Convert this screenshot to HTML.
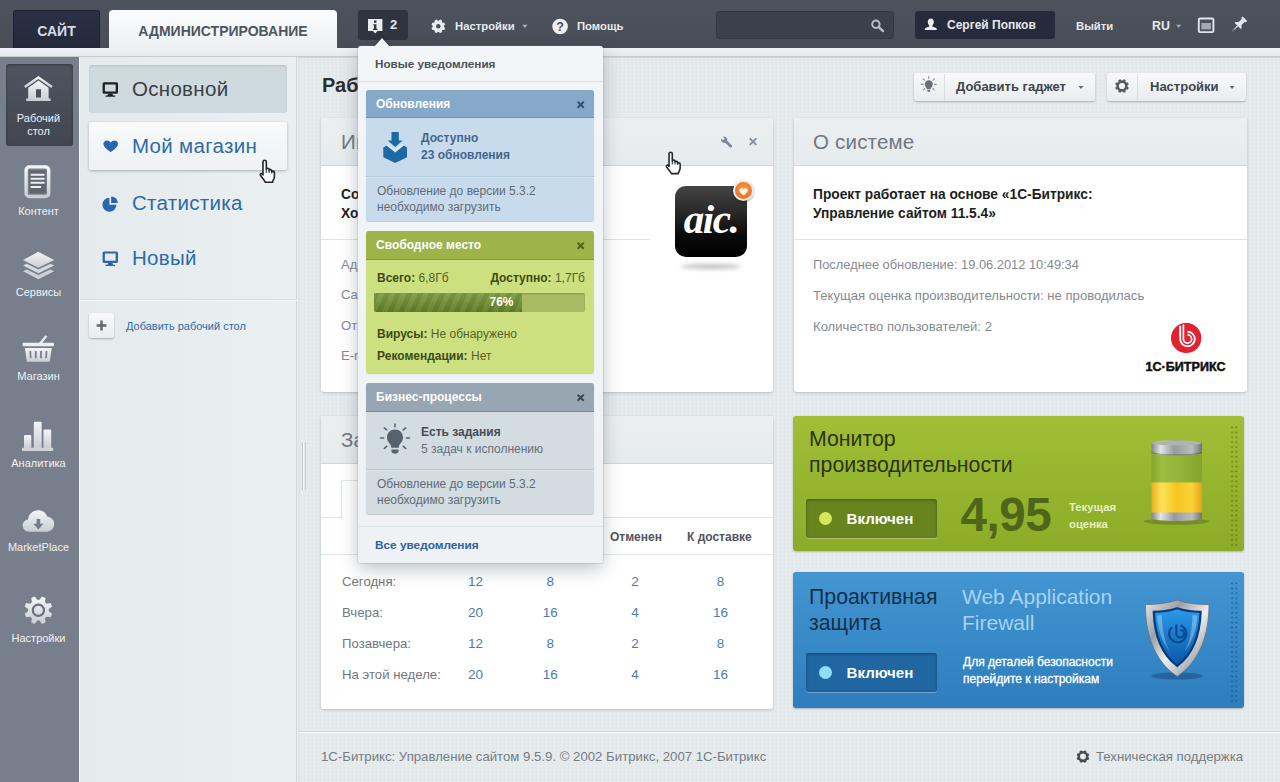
<!DOCTYPE html>
<html lang="ru">
<head>
<meta charset="utf-8">
<title>1С-Битрикс: Администрирование</title>
<style>
*{box-sizing:border-box;margin:0;padding:0}
html,body{width:1280px;height:782px;overflow:hidden}
body{position:relative;font-family:"Liberation Sans",sans-serif;font-size:12px;color:#333;background:#e6ebee}
.abs{position:absolute}
.b{font-weight:bold}
/* ---------- top bar ---------- */
#topbar{left:0;top:0;width:1280px;height:48px;background:linear-gradient(#4d535c,#484e57)}
#strip{left:0;top:48px;width:1280px;height:9px;background:linear-gradient(#eff2f4,#e6eaed);border-bottom:1px solid #c6cdd1}
#tab-site{left:13px;top:10px;width:87px;height:38px;background:linear-gradient(#2b3145,#232939);border-radius:3px 3px 0 0;border:1px solid #1d2230;border-bottom:0;color:#d9dde3;font-weight:bold;font-size:14px;line-height:41px;text-align:center}
#tab-admin{left:109px;top:10px;width:228px;height:40px;background:linear-gradient(#fbfcfd,#ecf0f2);border-radius:4px 4px 0 0;color:#50555c;font-weight:bold;font-size:14px;line-height:42px;text-align:center}
.tm{color:#e6e9ed;font-weight:bold;font-size:11.3px;line-height:14px;white-space:nowrap}
#notif-btn{left:358px;top:10px;width:50px;height:30px;background:#2f343f;border-radius:3px}
#search{left:716px;top:11px;width:178px;height:28px;background:#3b404c;border:1px solid #333843;border-radius:3px}
#user{left:915px;top:11px;width:140px;height:28px;background:#262b3c;border-radius:3px}
/* ---------- sidebars ---------- */
#side1{left:0;top:57px;width:79px;height:725px;background:#777f8c}
#side1-active{left:6px;top:64px;width:67px;height:82px;background:linear-gradient(#4f5560,#414651);border-radius:3px;box-shadow:inset 0 1px 3px rgba(0,0,0,.35)}
.s1l{left:0;width:77px;text-align:center;color:#eef1f4;font-size:11px;line-height:13px;white-space:nowrap}
#side2{left:79px;top:57px;width:218px;height:725px;background:linear-gradient(90deg,#e5ebed,#eaeff1);border-right:1px solid #d3dade;box-shadow:inset 1px 0 0 #f4f7f8}
.s2i{left:89px;width:198px;height:48px;border-radius:3px}
.s2t{left:132px;font-size:20.5px;line-height:24px;color:#2d6aa6;white-space:nowrap;letter-spacing:.3px}
/* ---------- main ---------- */
#main{left:298px;top:57px;width:982px;height:725px;background-color:#e3e9eb;background-image:repeating-linear-gradient(90deg,rgba(255,255,255,.16) 0 1px,transparent 1px 4px),repeating-linear-gradient(0deg,rgba(255,255,255,.1) 0 1px,transparent 1px 4px);box-shadow:inset 0 1px 0 #cfd6da,inset 2px 0 0 #dfe5e8}
.widget{background:#fff;border-radius:3px;box-shadow:0 1px 3px rgba(60,80,100,.28)}
.whead{left:0;top:0;width:100%;height:48px;background:linear-gradient(#ebeff2,#e6ebee);border-bottom:1px solid #cfd6db;border-radius:3px 3px 0 0}
.wtitle{font-size:20.5px;color:#70787f;line-height:24px;white-space:nowrap;letter-spacing:.2px}
.gray{color:#858a90}
.btn{background:linear-gradient(#f7f9fa,#e9edf0);border-radius:3px;box-shadow:0 1px 2px rgba(60,80,100,.4)}
.num{font-size:13.5px;line-height:31px;color:#4d7bab;text-align:center;width:24px;white-space:nowrap}
</style>
</head>
<body>
<!-- TOPBAR -->
<div id="topbar" class="abs"></div>
<div id="strip" class="abs"></div>
<div id="tab-site" class="abs">САЙТ</div>
<div id="tab-admin" class="abs">АДМИНИСТРИРОВАНИЕ</div>
<div id="notif-btn" class="abs"></div>
<div class="abs tm" style="left:390px;top:17.500px;font-size:13px">2</div>
<div class="abs tm" style="left:455px;top:19px">Настройки</div>
<div class="abs tm" style="left:577px;top:19px">Помощь</div>
<div id="search" class="abs"></div>
<div id="user" class="abs"></div>
<div class="abs tm" style="left:947px;top:18px;font-size:12px">Сергей Попков</div>
<div class="abs tm" style="left:1076px;top:19px">Выйти</div>
<div class="abs tm" style="left:1152px;top:18.5px;font-size:12.3px">RU</div>

<!-- SIDEBAR 1 -->
<div id="side1" class="abs"></div>
<div id="side1-active" class="abs"></div>
<div class="abs s1l" style="top:112px">Рабочий<br>стол</div>
<div class="abs s1l" style="top:205px">Контент</div>
<div class="abs s1l" style="top:286px">Сервисы</div>
<div class="abs s1l" style="top:370px">Магазин</div>
<div class="abs s1l" style="top:457px">Аналитика</div>
<div class="abs s1l" style="top:541px">MarketPlace</div>
<div class="abs s1l" style="top:632px">Настройки</div>

<!-- SIDEBAR 2 -->
<div id="side2" class="abs"></div>
<div class="abs s2i" style="top:65px;background:#cfdadf;box-shadow:inset 0 1px 2px rgba(0,0,0,.12)"></div>
<div class="abs s2i" style="top:122px;background:linear-gradient(#f8fafb,#eef2f4);box-shadow:0 1px 3px rgba(60,80,100,.4)"></div>
<div class="abs s2t" style="top:77px;color:#3a3f45">Основной</div>
<div class="abs s2t" style="top:134px">Мой магазин</div>
<div class="abs s2t" style="top:191px">Статистика</div>
<div class="abs s2t" style="top:246px">Новый</div>
<div class="abs" style="left:80px;top:299px;width:217px;height:1px;background:#d5dde1"></div>
<div class="abs" style="left:80px;top:300px;width:217px;height:1px;background:#f6f9fa"></div>
<div class="abs btn" style="left:89px;top:313px;width:25px;height:25px"></div>
<div class="abs" style="left:126px;top:319px;font-size:11px;line-height:14px;color:#2d6aa6;white-space:nowrap">Добавить рабочий стол</div>

<!-- MAIN -->
<div id="main" class="abs"></div>
<div class="abs b" style="left:322px;top:71px;font-size:20px;line-height:28px;color:#2a2d31">Рабочий стол</div>


<!-- WIDGET 1 -->
<div class="abs widget" style="left:321px;top:118px;width:452px;height:274px">
  <div class="abs whead"></div>
  <div class="abs wtitle" style="left:20px;top:12px">Информация</div>
  <div class="abs b" style="left:20px;top:66.500px;font-size:13.75px;line-height:19.5px;color:#1d1f22;white-space:nowrap">Создание сайта: студия<br>Хорошие люди AIC</div>
  <div class="abs" style="left:0;top:121px;width:329px;height:1px;background:#dfe4e7"></div>
  <div class="abs gray" style="left:20px;top:131.700px;font-size:13.1px;line-height:30.6px;white-space:nowrap">Адрес сайта:<br>Сайт:<br>Ответственное лицо:<br>E-mail:</div>
  <div class="abs" style="left:354px;top:68px;width:72px;height:71px;border-radius:11px;background:linear-gradient(#454545,#2a2a2a 35%,#0a0a0a 70%,#000)"></div>
  <div class="abs" style="left:360px;top:146px;width:60px;height:5px;border-radius:50%;background:rgba(0,0,0,.25);filter:blur(2px)"></div>
  <div class="abs" style="left:352px;top:79px;width:76px;text-align:center;font-family:'Liberation Serif',serif;font-style:italic;font-weight:bold;font-size:41px;line-height:44px;color:#fff;letter-spacing:-1.5px">aic.</div>
  <div class="abs" style="left:412px;top:62px;width:21px;height:21px;border-radius:50%;background:radial-gradient(circle at 50% 40%,#f79a4a,#e8641c);border:2px solid #f3ebe3;box-shadow:0 1px 2px rgba(0,0,0,.4)"></div>
</div>

<!-- WIDGET 2 : orders -->
<div class="abs widget" style="left:321px;top:416px;width:452px;height:293px">
  <div class="abs whead"></div>
  <div class="abs wtitle" style="left:20px;top:12px">Заказы</div>
  <div class="abs" style="left:0;top:101px;width:452px;height:1px;background:#dfe4e7"></div>
  <div class="abs" style="left:20px;top:64px;width:110px;height:38px;border:1px solid #dfe4e7;border-bottom:1px solid #fff;border-radius:3px 3px 0 0;background:#fff"></div>
  <div class="abs" style="left:0;top:138px;width:452px;height:1px;background:#e4e8eb"></div>
  <div class="abs b" style="left:289px;top:114px;font-size:12px;line-height:14px;color:#50555a;white-space:nowrap">Отменен</div>
  <div class="abs b" style="left:366px;top:114px;font-size:12px;line-height:14px;color:#50555a;white-space:nowrap">К доставке</div>
  <div class="abs b" style="left:128px;top:114px;font-size:12px;line-height:14px;color:#50555a;white-space:nowrap">Создан</div>
  <div class="abs b" style="left:203px;top:114px;font-size:12px;line-height:14px;color:#50555a;white-space:nowrap">Оплачен</div>
  <div class="abs" style="left:21px;top:149.700px;color:#72777c;font-size:13.2px;line-height:31px;white-space:nowrap">Сегодня:<br>Вчера:<br>Позавчера:<br>На этой неделе:</div>
  <div class="abs num" style="left:142.400px;top:149.900px">12<br>20<br>12<br>20</div>
  <div class="abs num" style="left:217.300px;top:149.900px">8<br>16<br>8<br>16</div>
  <div class="abs num" style="left:302px;top:149.900px">2<br>4<br>2<br>4</div>
  <div class="abs num" style="left:387.400px;top:149.900px">8<br>16<br>8<br>16</div>
</div>

<!-- WIDGET 3 : about system -->
<div class="abs widget" style="left:794px;top:118px;width:453px;height:274px">
  <div class="abs whead"></div>
  <div class="abs wtitle" style="left:19px;top:12px">О системе</div>
  <div class="abs b" style="left:19px;top:66.500px;font-size:13.75px;line-height:19.5px;color:#1d1f22;white-space:nowrap">Проект работает на основе «1С-Битрикс:<br>Управление сайтом 11.5.4»</div>
  <div class="abs" style="left:0;top:121px;width:453px;height:1px;background:#dfe4e7"></div>
  <div class="abs gray" style="left:19px;top:139px;font-size:12.85px;line-height:15px;white-space:nowrap">Последнее обновление: 19.06.2012 10:49:34</div>
  <div class="abs gray" style="left:19px;top:169.700px;font-size:13.1px;line-height:15px;white-space:nowrap">Текущая оценка производительности: не проводилась</div>
  <div class="abs gray" style="left:19px;top:201px;font-size:13.1px;line-height:15px;white-space:nowrap">Количество пользователей: 2</div>
  <div class="abs" style="left:377px;top:205px;width:30px;height:30px;border-radius:50%;background:#e0232d"></div>
  <div class="abs b" style="left:351.500px;top:241.500px;font-size:12.5px;line-height:14px;color:#111;white-space:nowrap;letter-spacing:.05px;-webkit-text-stroke:.5px #111">1С·БИТРИКС</div>
</div>

<!-- toolbar buttons -->
<div class="abs btn" style="left:914px;top:73px;width:181px;height:28px"></div>
<div class="abs" style="left:944px;top:74px;width:1px;height:26px;background:#d9dfe3"></div>
<div class="abs b" style="left:956px;top:80px;font-size:13px;line-height:14px;color:#3f444a;white-space:nowrap">Добавить гаджет</div>
<div class="abs btn" style="left:1107px;top:73px;width:139px;height:28px"></div>
<div class="abs" style="left:1137px;top:74px;width:1px;height:26px;background:#d9dfe3"></div>
<div class="abs b" style="left:1150px;top:80px;font-size:13px;line-height:14px;color:#3f444a;white-space:nowrap">Настройки</div>

<!-- GREEN PANEL -->
<div class="abs" style="left:793px;top:416px;width:451px;height:135px;border-radius:3px;background:linear-gradient(#a0bf36,#8cab27);box-shadow:0 1px 2px rgba(60,80,100,.35)">
  <div class="abs" style="left:16px;top:9.500px;font-size:21.3px;line-height:26.8px;color:#2a3312;white-space:nowrap">Монитор<br>производительности</div>
  <div class="abs" style="left:13px;top:82.500px;width:131px;height:39.500px;border-radius:3px;background:#67841f;box-shadow:inset 0 1px 3px rgba(0,0,0,.35),0 1px 0 rgba(255,255,255,.3)"></div>
  <div class="abs" style="left:26px;top:96px;width:13px;height:13px;border-radius:50%;background:#d4e95a"></div>
  <div class="abs b" style="left:53.500px;top:94px;font-size:15.1px;line-height:17px;color:#fff;white-space:nowrap">Включен</div>
  <div class="abs b" style="left:167.500px;top:73.500px;font-size:47.5px;line-height:50px;color:#4e651a;white-space:nowrap;letter-spacing:-.4px">4,95</div>
  <div class="abs" style="left:276px;top:83px;font-size:11.3px;font-weight:bold;line-height:17.2px;color:#e6f0c4;white-space:nowrap">Текущая<br>оценка</div>
  <div class="abs" style="left:436.700px;top:8.500px;width:8.400px;height:122px;background-image:radial-gradient(circle at 50% 50%,rgba(75,100,15,.5) 0 .9px,transparent 1.3px);background-size:4.200px 4.900px"></div>
</div>

<!-- BLUE PANEL -->
<div class="abs" style="left:793px;top:572px;width:451px;height:136px;border-radius:3px;background:linear-gradient(#4396d2,#2e7dbd);box-shadow:0 1px 2px rgba(60,80,100,.35)">
  <div class="abs" style="left:16px;top:12px;font-size:21.3px;line-height:26px;color:#14304a;white-space:nowrap">Проактивная<br>защита</div>
  <div class="abs" style="left:169px;top:12px;font-size:21px;line-height:26px;color:#a9d2f0;white-space:nowrap">Web Application<br>Firewall</div>
  <div class="abs" style="left:13px;top:80.500px;width:131px;height:39.500px;border-radius:3px;background:#2066a1;box-shadow:inset 0 1px 3px rgba(0,0,0,.35),0 1px 0 rgba(255,255,255,.3)"></div>
  <div class="abs" style="left:26px;top:94px;width:13px;height:13px;border-radius:50%;background:#8fdcf5"></div>
  <div class="abs b" style="left:53.500px;top:92px;font-size:15.1px;line-height:17px;color:#fff;white-space:nowrap">Включен</div>
  <div class="abs" style="left:170px;top:81.500px;font-size:12px;line-height:17.2px;color:#fff;-webkit-text-stroke:.3px #fff;white-space:nowrap">Для деталей безопасности<br>перейдите к настройкам</div>
  <div class="abs" style="left:436.700px;top:8.500px;width:8.400px;height:122px;background-image:radial-gradient(circle at 50% 50%,rgba(20,70,130,.5) 0 .9px,transparent 1.3px);background-size:4.200px 4.900px"></div>
</div>


<svg class="abs" style="left:0;top:0" width="1280" height="782" viewBox="0 0 1280 782">
<defs><linearGradient id="gsil" x1="0" y1="0" x2="0" y2="1"><stop offset="0" stop-color="#f4f5f7"/><stop offset="1" stop-color="#c9cdd3"/></linearGradient><linearGradient id="gmet" x1="0" y1="0" x2="1" y2="0"><stop offset="0" stop-color="#7e8486"/><stop offset=".18" stop-color="#e2e5e6"/><stop offset=".45" stop-color="#959b9d"/><stop offset=".8" stop-color="#b9bdbf"/><stop offset="1" stop-color="#6e7476"/></linearGradient><linearGradient id="gyel" x1="0" y1="0" x2="1" y2="0"><stop offset="0" stop-color="#e9b21a"/><stop offset=".2" stop-color="#ffe25a"/><stop offset=".5" stop-color="#f7c61f"/><stop offset=".8" stop-color="#fbd13a"/><stop offset="1" stop-color="#e2a715"/></linearGradient><linearGradient id="ggrn" x1="0" y1="0" x2="1" y2="0"><stop offset="0" stop-color="#84a62c"/><stop offset=".2" stop-color="#9dbd42"/><stop offset=".6" stop-color="#92b437"/><stop offset="1" stop-color="#82a52b"/></linearGradient><linearGradient id="gshb" x1="0" y1="0" x2="0" y2="1"><stop offset="0" stop-color="#2a9bea"/><stop offset="1" stop-color="#0b55a6"/></linearGradient><linearGradient id="gshs" x1="0" y1="0" x2="1" y2="1"><stop offset="0" stop-color="#e6e8ea"/><stop offset=".3" stop-color="#9aa1a8"/><stop offset=".55" stop-color="#eceef0"/><stop offset=".8" stop-color="#a4abb2"/><stop offset="1" stop-color="#d8dbde"/></linearGradient></defs>
<path d="M368 19h14.4v12h-5l-2.2 2.6-2.2-2.6h-5z" fill="#e9ecef"/>
<path d="M374 20.6h2.4v2.2H374zM373.2 24.2h3.2v4.6h1v1.1h-4.4v-1.1h1v-3.5h-.8z" fill="#2f343f"/>
<path d="M443.88 26.78 L445.10 27.98 L444.29 29.92 L442.59 29.90 L441.90 30.59 L441.92 32.29 L439.98 33.10 L438.78 31.88 L437.82 31.88 L436.62 33.10 L434.68 32.29 L434.70 30.59 L434.01 29.90 L432.31 29.92 L431.50 27.98 L432.72 26.78 L432.72 25.82 L431.50 24.62 L432.31 22.68 L434.01 22.70 L434.70 22.01 L434.68 20.31 L436.62 19.50 L437.82 20.72 L438.78 20.72 L439.98 19.50 L441.92 20.31 L441.90 22.01 L442.59 22.70 L444.29 22.68 L445.10 24.62 L443.88 25.82Z M436.00 26.30 a2.3 2.3 0 1 0 4.6 0 a2.3 2.3 0 1 0 -4.6 0Z" fill="#e9ecef" fill-rule="evenodd"/>
<path d="M522.3 24.8h5.2l-2.6 3.2z" fill="#aab0b9"/>
<path d="M1176 24.8h5.4l-2.7 3z" fill="#aab0b9"/>
<circle cx="560.1" cy="26.5" r="7.8" fill="#eef0f3"/>
<text x="560.1" y="31" text-anchor="middle" font-family="Liberation Sans, sans-serif" font-weight="bold" font-size="12.5" fill="#474d57">?</text>
<circle cx="875.9" cy="24.2" r="3.7" fill="none" stroke="#b9bec6" stroke-width="2"/><path d="M878.7 27.1l4.3 4" stroke="#b9bec6" stroke-width="2.4" stroke-linecap="round"/>
<path d="M930.8 18.6c1.9 0 3 1.5 3 3.4 0 1.4-.6 2.7-1.5 3.4v1c1.6.5 4 1.1 4.3 2.2.2.6.2 1.1.2 1.5h-12c0-.4 0-.9.2-1.5.3-1.1 2.700-1.700 4.300-2.200v-1c-.9-.7-1.500-2-1.500-3.400 0-1.900 1.100-3.400 3-3.400z" fill="#eef0f3"/>
<rect x="1198.8" y="18.5" width="14.6" height="13.6" rx="1.2" fill="none" stroke="#e3e6ea" stroke-width="1.9"/><rect x="1201.3" y="23" width="9.6" height="6.4" fill="#a3a9b2"/>
<g transform="translate(1238.200 25.400) rotate(45)" fill="#e3e6ea"><path d="M-3.200-9.500h6.400v1.800l-1.200.8v4.200l2.400 2.200v1.300h-8.800v-1.300l2.400-2.200v-4.200l-1.200-.8z"/><path d="M-.7.800h1.400l-.7 9z"/></g>
<path d="M38.4 76l14.300 10-1.400 1.900-12.900-9-12.900 9-1.400-1.900z" fill="url(#gsil)"/>
<path d="M38.4 80.600l10.200 7.100v10.700h2v2.600h-24.400v-2.600h2v-10.700zM36 89.200v8.200h5v-8.200z" fill="url(#gsil)" fill-rule="evenodd"/>
<rect x="26.1" y="166.900" width="22.600" height="29.600" rx="3.300" fill="none" stroke="url(#gsil)" stroke-width="3.400"/>
<rect x="29.300" y="170.300" width="16.400" height="23" fill="#5f6672"/>
<path d="M30.600 174.700h14M30.600 178.700h14M30.600 182.700h14M30.600 186.900h10.400" stroke="#eceef1" stroke-width="2"/>
<path d="M38.400 251.800l15.800 8.300-15.800 7.600-15.400-7.600z" fill="url(#gsil)"/>
<path d="M23 265.600l3.800-1.900 11.600 5.700 12-5.700 3.800 1.900-15.800 7.600z" fill="#d5d9de"/>
<path d="M23 271.300l3.800-1.900 11.600 5.700 12-5.700 3.800 1.900-15.800 8z" fill="#cdd1d7"/>
<path d="M45.400 335.200l1.900 1.300-5.700 7.200h-3.200z" fill="#e9ebee"/>
<rect x="22.600" y="342.700" width="31.400" height="3.600" rx="1" fill="#eceef1"/>
<path d="M24.900 348h26.800l-1.900 13.800h-23zM29.400 351h1.800l.3 7.200h-1.600zM34.900 351h1.800v7.200h-1.800zM40.100 351h1.800v7.200h-1.800zM45.600 351h1.800l-.5 7.200h-1.600z" fill="url(#gsil)" fill-rule="evenodd"/>
<rect x="24" y="435" width="7.300" height="13.500" rx="1" fill="url(#gsil)"/><rect x="33.800" y="421.800" width="7.900" height="26.700" rx="1" fill="url(#gsil)"/><rect x="43.500" y="429.400" width="7.700" height="19" rx="1" fill="url(#gsil)"/><rect x="22" y="447.800" width="31.200" height="3.300" rx=".8" fill="#d0d4d9"/>
<path d="M29.500 531.800c-4 0-6.800-2.800-6.800-6.200 0-3.100 2.300-5.500 5.300-6 .6-5.300 4.600-9.300 10.100-9.300 4.400 0 8 2.700 9.300 6.500 3.900.3 6.800 3.400 6.800 7.300 0 4.200-3.200 7.700-7.600 7.700z" fill="url(#gsil)"/>
<path d="M36.600 519h3.600v4.700h3.300l-5.100 5.700-5.100-5.700h3.300z" fill="#767d8a"/>
<path d="M48.74 611.34 L52.14 613.80 L50.66 617.37 L46.52 616.70 L44.90 618.32 L45.57 622.46 L42.00 623.94 L39.54 620.54 L37.26 620.54 L34.80 623.94 L31.23 622.46 L31.90 618.32 L30.28 616.70 L26.14 617.37 L24.66 613.80 L28.06 611.34 L28.06 609.06 L24.66 606.60 L26.14 603.03 L30.28 603.70 L31.90 602.08 L31.23 597.94 L34.80 596.46 L37.26 599.86 L39.54 599.86 L42.00 596.46 L45.57 597.94 L44.90 602.08 L46.52 603.70 L50.66 603.03 L52.14 606.60 L48.74 609.06Z" fill="url(#gsil)"/>
<circle cx="38.400" cy="610.200" r="5.600" fill="none" stroke="#6a717d" stroke-width="2.200"/>
<path d="M104.19999999999999 82.2h12.200a1.600 1.600 0 0 1 1.600 1.600v8.400a1.600 1.600 0 0 1-1.600 1.600h-12.200a1.600 1.600 0 0 1-1.600-1.600v-8.400a1.600 1.600 0 0 1 1.600-1.600zM104.89999999999999 84.4v7.200h10.800v-7.200z" fill="#1d2024" fill-rule="evenodd"/><path d="M108.19999999999999 93.8h4.200l.7 1.700h2v1.300h-9.600v-1.300h2z" fill="#1d2024"/>
<path d="M104.19999999999999 251.4h12.200a1.600 1.600 0 0 1 1.600 1.600v8.400a1.600 1.600 0 0 1-1.600 1.600h-12.200a1.600 1.600 0 0 1-1.600-1.600v-8.400a1.600 1.600 0 0 1 1.600-1.600zM104.89999999999999 253.6v7.200h10.800v-7.200z" fill="#2d66a6" fill-rule="evenodd"/><path d="M108.19999999999999 263.0h4.200l.7 1.700h2v1.300h-9.600v-1.300h2z" fill="#2d66a6"/>
<path d="M110.700 152.300c-2.800-2.300-7.300-5.200-7.300-8.500 0-2 1.600-3.400 3.500-3.400 1.500 0 2.900.8 3.800 2 .9-1.200 2.300-2 3.800-2 1.900 0 3.500 1.400 3.500 3.400 0 3.300-4.500 6.200-7.300 8.500z" fill="#2866ad"/>
<path d="M109.400 197.800v6.900h7a7 7 0 1 1-7-6.900z" fill="#2866ad"/><path d="M111.100 196.400a6.800 6.800 0 0 1 6.800 6.700h-6.800z" fill="#2866ad"/>
<path d="M100.300 320.600h2.400v3.700h3.700v2.400h-3.700v3.700h-2.400v-3.700h-3.700v-2.400h3.700z" fill="#5f6770"/>
<g transform="translate(258.0 159.6) scale(1.08)"><path d="M4.6 2.1a1.55 1.55 0 0 1 3.1 0V8.9c0-1.3 2.6-1.2 2.6.3v.8c0-1.2 2.5-1 2.5.4v1c0-1.1 2.4-.9 2.4.5v3.8c0 2.4-1.5 3.4-1.8 5.3H6.8c-.5-1.8-2.6-3.6-4.4-6.2-1-1.6.6-2.6 1.8-1.3l.4.7z" fill="#fff" stroke="#23272d" stroke-width="1.5" stroke-linejoin="round"/><path d="M7.7 9v3.2M10.3 10v2.4M12.8 11v1.8" stroke="#23272d" stroke-width="1" fill="none"/></g>
<path d="M928.800 80.300c2.300 0 4 1.700 4 3.900 0 1.500-.8 2.500-1.500 3.300-.5.600-.7 1.200-.7 1.800h-3.600c0-.6-.2-1.200-.7-1.800-.7-.8-1.500-1.800-1.500-3.300 0-2.200 1.700-3.900 4-3.900z" fill="#6b7077"/><rect x="927.200" y="90" width="3.200" height="1.800" rx=".8" fill="#6b7077"/>
<path d="M928.800 76.500v1.800M923.300 78.800l1.300 1.300M934.300 78.800l-1.300 1.300M921.300 84.300h1.800M934.500 84.300h1.800M923.500 89.800l1.200-1.200M934.100 89.800l-1.200-1.200" stroke="#8b9097" stroke-width="1.200" stroke-linecap="round"/>
<path d="M1127.48 86.47 L1128.80 87.68 L1127.99 89.62 L1126.21 89.54 L1125.54 90.21 L1125.62 91.99 L1123.68 92.80 L1122.47 91.48 L1121.53 91.48 L1120.32 92.80 L1118.38 91.99 L1118.46 90.21 L1117.79 89.54 L1116.01 89.62 L1115.20 87.68 L1116.52 86.47 L1116.52 85.53 L1115.20 84.32 L1116.01 82.38 L1117.79 82.46 L1118.46 81.79 L1118.38 80.01 L1120.32 79.20 L1121.53 80.52 L1122.47 80.52 L1123.68 79.20 L1125.62 80.01 L1125.54 81.79 L1126.21 82.46 L1127.99 82.38 L1128.80 84.32 L1127.48 85.53Z M1118.90 86.00 a3.1 3.1 0 1 0 6.2 0 a3.1 3.1 0 1 0 -6.2 0Z" fill="#555a61" fill-rule="evenodd"/>
<path d="M1078.400 86h5.200l-2.600 3z" fill="#666b72"/><path d="M1229.500 86h5.200l-2.600 3z" fill="#666b72"/>
<path d="M302.500 442v48M305.500 442v48" stroke="#c3cbd0" stroke-width="1"/><path d="M303.500 442v48" stroke="#f4f7f8" stroke-width="1"/>
<g transform="translate(726.600 142.200) rotate(-45) scale(.86)" fill="#7d8899"><path d="M-1.600-1.500h3.200v8.300a1.600 1.600 0 0 1-3.200 0z"/><path d="M-3.600-4.200a3.800 3.800 0 0 1 2.200-3.300v3h2.800v-3a3.800 3.800 0 0 1 2.200 3.300 3.800 3.800 0 0 1-3.600 3.700 3.800 3.800 0 0 1-3.600-3.700z"/></g>
<path d="M749.800 138.300l6.600 6.600M756.400 138.300l-6.600 6.600" stroke="#7f8ca1" stroke-width="1.700"/>
<path d="M743.600 195.200c-1.700-1.400-4.300-3-4.300-5 0-1.200 1-2 2.100-2 .9 0 1.700.5 2.200 1.200.5-.7 1.300-1.200 2.200-1.200 1.100 0 2.100.8 2.100 2 0 2-2.600 3.600-4.300 5z" fill="#fff6ea"/>
<g transform="translate(664.2 151.6) scale(1.05)"><path d="M4.6 2.1a1.55 1.55 0 0 1 3.1 0V8.9c0-1.3 2.6-1.2 2.6.3v.8c0-1.2 2.5-1 2.5.4v1c0-1.1 2.4-.9 2.4.5v3.8c0 2.4-1.5 3.4-1.8 5.3H6.8c-.5-1.8-2.6-3.6-4.4-6.2-1-1.6.6-2.6 1.8-1.3l.4.7z" fill="#fff" stroke="#23272d" stroke-width="1.5" stroke-linejoin="round"/><path d="M7.7 9v3.2M10.3 10v2.4M12.8 11v1.8" stroke="#23272d" stroke-width="1" fill="none"/></g>
<circle cx="1186.500" cy="338" r="14.800" fill="#e0232e"/>
<path d="M1180.200 325.800v13.200a7.300 7.300 0 1 0 7.300-7.300" fill="none" stroke="#fff" stroke-width="1.900"/><path d="M1183.400 324.600v14.400a4.100 4.100 0 1 0 4.100-4.100" fill="none" stroke="#fff" stroke-width="1.700"/>
<ellipse cx="1176.500" cy="521.500" rx="33" ry="3.200" fill="rgba(50,70,10,.3)"/>
<rect x="1151.500" y="452" width="50.500" height="31" fill="url(#ggrn)"/>
<rect x="1151.500" y="482.500" width="50.500" height="31" fill="url(#gyel)"/>
<path d="M1151.500 512.500h50.500v5.500c0 4-50.500 4-50.500 0z" fill="url(#gmet)"/>
<path d="M1151.500 443c0-3.600 50.500-3.600 50.500 0v10c0 3-50.500 3-50.500 0z" fill="url(#gmet)"/>
<ellipse cx="1176.700" cy="443" rx="25" ry="2.300" fill="#aeb3b4"/>
<path d="M1151.500 452.500c8 3.200 42.500 3.200 50.500 0" fill="none" stroke="rgba(60,70,40,.45)" stroke-width="1"/>
<ellipse cx="1177" cy="676" rx="26" ry="3.500" fill="rgba(10,40,90,.35)"/>
<path d="M1177.200 600c9 3.400 21 4.600 31.800 4.600 0 28-8 56-31.800 71.800-23.800-15.800-31.800-43.800-31.800-71.800 10.800 0 22.800-1.200 31.800-4.600z" fill="url(#gshs)" stroke="#66717c" stroke-width=".8"/>
<path d="M1177.200 608.300c6.900 2.400 15.400 3.500 23.400 3.600-.6 21-7 41.500-23.400 54.100-16.400-12.600-22.800-33.100-23.400-54.100 8-.1 16.500-1.200 23.400-3.600z" fill="url(#gshb)" stroke="#0a3a78" stroke-width="2.200"/>
<path d="M1157 615.500c1.600 0 3.200-.2 4.800-.4.500 14 2.600 26 7.600 36-7.800-10-11.600-22-12.400-35.600zM1197.400 615.500c-1.600 0-3.200-.2-4.800-.4-.5 14-2.600 26-7.600 36 7.800-10 11.600-22 12.400-35.600z" fill="rgba(255,255,255,.3)"/>
<path d="M1176.400 624.500v9.300a3.800 3.800 0 1 0 3.800-3.800" fill="none" stroke="#0b4a94" stroke-width="2.200"/><path d="M1172 627.200a8.600 8.600 0 1 0 8.500-1.700" fill="none" stroke="#0b4a94" stroke-width="2.200"/>
<path d="M1088.28 757.06 L1089.21 758.13 L1088.48 759.91 L1087.06 760.01 L1086.41 760.66 L1086.31 762.08 L1084.53 762.81 L1083.46 761.88 L1082.54 761.88 L1081.47 762.81 L1079.69 762.08 L1079.59 760.66 L1078.94 760.01 L1077.52 759.91 L1076.79 758.13 L1077.72 757.06 L1077.72 756.14 L1076.79 755.07 L1077.52 753.29 L1078.94 753.19 L1079.59 752.54 L1079.69 751.12 L1081.47 750.39 L1082.54 751.32 L1083.46 751.32 L1084.53 750.39 L1086.31 751.12 L1086.41 752.54 L1087.06 753.19 L1088.48 753.29 L1089.21 755.07 L1088.28 756.14Z M1080.00 756.60 a3.0 3.0 0 1 0 6.0 0 a3.0 3.0 0 1 0 -6.0 0Z" fill="#474c52" fill-rule="evenodd"/>
</svg>
<!-- POPUP -->
<div class="abs" style="left:358px;top:46px;width:245px;height:517px;background:linear-gradient(#f3f6f8,#eef2f5);border-radius:3px;box-shadow:0 6px 18px rgba(40,55,70,.3),0 0 0 1px rgba(120,135,150,.18)">
  <div class="abs" style="left:16px;top:34px;width:12px;height:12px"></div>
  <div class="abs b" style="left:17px;top:11px;font-size:11.7px;line-height:14px;color:#4c5157;white-space:nowrap">Новые уведомления</div>
  <div class="abs" style="left:0;top:35px;width:245px;height:1px;background:#dde3e7"></div>

  <!-- card 1 -->
  <div class="abs" style="left:8px;top:44px;width:228px;height:131px;border-radius:3px;background:#c8dbec;box-shadow:0 1px 1px rgba(60,80,100,.25)">
    <div class="abs" style="left:0;top:0;width:228px;height:28px;border-radius:3px 3px 0 0;background:#86a9ca;box-shadow:inset 0 -1px 0 rgba(40,70,100,.25)"></div>
    <div class="abs b" style="left:10px;top:7px;font-size:12px;line-height:14px;color:#fff;white-space:nowrap">Обновления</div>
    <div class="abs b" style="left:55px;top:40px;font-size:12px;line-height:17px;color:#43658c;white-space:nowrap">Доступно<br>23 обновления</div>
    <div class="abs" style="left:0;top:86px;width:228px;height:1px;background:#b4cadd"></div>
    <div class="abs" style="left:0;top:87px;width:228px;height:1px;background:#d6e5f1"></div>
    <div class="abs" style="left:11px;top:94px;font-size:12px;line-height:15.5px;color:#5f6b76;white-space:nowrap">Обновление до версии 5.3.2<br>необходимо загрузить</div>
  </div>

  <!-- card 2 -->
  <div class="abs" style="left:8px;top:185px;width:228px;height:142px;border-radius:3px;background:#cde07f;box-shadow:0 1px 1px rgba(60,80,100,.25)">
    <div class="abs" style="left:0;top:0;width:228px;height:29px;border-radius:3px 3px 0 0;background:#9eb34a;box-shadow:inset 0 -1px 0 rgba(60,80,20,.25)"></div>
    <div class="abs b" style="left:10px;top:7px;font-size:12px;line-height:14px;color:#fff;white-space:nowrap">Свободное место</div>
    <div class="abs" style="left:11px;top:39.800px;font-size:12px;line-height:14px;color:#56612a;white-space:nowrap"><b style="color:#3f4a14">Всего:</b> 6,8Гб</div>
    <div class="abs" style="right:9px;top:39.800px;font-size:12px;line-height:14px;color:#56612a;white-space:nowrap"><b style="color:#3f4a14">Доступно:</b> 1,7Гб</div>
    <div class="abs" style="left:8px;top:62px;width:211px;height:19px;border-radius:2px;background:#a9bb62;box-shadow:inset 0 1px 2px rgba(0,0,0,.2)"></div>
    <div class="abs" style="left:8px;top:62px;width:148px;height:19px;border-radius:2px 0 0 2px;background:linear-gradient(rgba(255,255,255,.12),rgba(0,0,0,.12)),repeating-linear-gradient(115deg,#67862b 0 5px,#769636 5px 10px)"></div>
    <div class="abs b" style="left:8px;top:64px;width:255px;text-align:center;font-size:12px;line-height:15px;color:#fff">76%</div>
    <div class="abs" style="left:11px;top:96.200px;font-size:12px;line-height:14px;color:#56612a;white-space:nowrap"><b style="color:#3f4a14">Вирусы:</b> Не обнаружено</div>
    <div class="abs" style="left:11px;top:118.200px;font-size:12px;line-height:14px;color:#56612a;white-space:nowrap"><b style="color:#3f4a14">Рекомендации:</b> Нет</div>
  </div>

  <!-- card 3 -->
  <div class="abs" style="left:8px;top:337px;width:228px;height:131px;border-radius:3px;background:#d3dce1;box-shadow:0 1px 1px rgba(60,80,100,.25)">
    <div class="abs" style="left:0;top:0;width:228px;height:29px;border-radius:3px 3px 0 0;background:#97a6b2;box-shadow:inset 0 -1px 0 rgba(40,60,80,.25)"></div>
    <div class="abs b" style="left:10px;top:7px;font-size:12px;line-height:14px;color:#fff;white-space:nowrap">Бизнес-процессы</div>
    <div class="abs b" style="left:55px;top:41px;font-size:12px;line-height:17px;color:#454c54;white-space:nowrap">Есть задания<br><span style="font-weight:normal;color:#66707a">5 задач к исполнению</span></div>
    <div class="abs" style="left:0;top:86px;width:228px;height:1px;background:#bcc7ce"></div>
    <div class="abs" style="left:0;top:87px;width:228px;height:1px;background:#dde5e9"></div>
    <div class="abs" style="left:11px;top:94px;font-size:12px;line-height:15.5px;color:#5f6b76;white-space:nowrap">Обновление до версии 5.3.2<br>необходимо загрузить</div>
  </div>

  <div class="abs" style="left:0;top:480px;width:245px;height:1px;background:#dde3e7"></div>
  <div class="abs b" style="left:17px;top:492px;font-size:11.8px;line-height:14px;color:#2d62a0;white-space:nowrap">Все уведомления</div>
</div>
<!-- popup arrow -->
<div class="abs" style="left:373.500px;top:37.500px;width:0;height:0;border-left:8.500px solid transparent;border-right:8.500px solid transparent;border-bottom:9px solid #f3f6f8;filter:drop-shadow(0 -1px 1px rgba(20,25,35,.45))"></div>

<svg class="abs" style="left:0;top:0" width="1280" height="782" viewBox="0 0 1280 782">
<path d="M577.600 101.60000000000001l6.200 6.200M583.800 101.60000000000001l-6.200 6.200" stroke="#2c5079" stroke-width="2"/>
<path d="M577.600 242.6l6.200 6.200M583.800 242.6l-6.200 6.200" stroke="#4f6214" stroke-width="2"/>
<path d="M577.600 394.59999999999997l6.200 6.200M583.800 394.59999999999997l-6.200 6.200" stroke="#3d4852" stroke-width="2"/>
<path d="M383.300 147.600l4.700-2.800 7.200 6 7.300-6 4.500 2.800v9.600l-11.800 5.900-11.900-5.900z" fill="#1d69a5"/>
<path d="M387.300 144.400l7.900 6.500 7.900-6.500" fill="none" stroke="#dbe8f4" stroke-width="2.600"/>
<path d="M391.500 132h7.300v8.500h3.900l-7.500 6.600-7.500-6.600h3.800z" fill="#1d69a5"/>
<path d="M395 429.600c4.600 0 8 3.500 8 7.900 0 2.900-1.500 4.700-2.700 6.300-.9 1.100-1.500 2.300-1.500 3.900h-7.600c0-1.600-.6-2.800-1.500-3.900-1.200-1.600-2.700-3.400-2.700-6.300 0-4.400 3.400-7.900 8-7.900z" fill="#56636f"/>
<path d="M391.400 449.500h7.200v1.600c0 1.600-1.600 2.700-3.600 2.700s-3.600-1.100-3.600-2.700z" fill="#56636f"/>
<path d="M395 424v2.800M384.300 427.900l2.400 2M405.700 427.900l-2.400 2M380.600 438h3M406.400 438h3M384.300 448.300l2.400-2M405.700 448.300l-2.400-2" stroke="#56636f" stroke-width="1.600" stroke-linecap="round"/>
</svg>
<!-- FOOTER -->
<div class="abs" style="left:298px;top:731px;width:982px;height:1px;background:#d3dade"></div>
<div class="abs" style="left:298px;top:732px;width:982px;height:1px;background:#f6f9fa"></div>
<div class="abs" style="left:321px;top:749px;font-size:13.2px;line-height:15px;color:#767c82;white-space:nowrap">1С-Битрикс: Управление сайтом 9.5.9. © 2002 Битрикс, 2007 1С-Битрикс</div>
<div class="abs" style="left:1096px;top:749px;font-size:13.2px;line-height:15px;color:#767c82;white-space:nowrap">Техническая поддержка</div>
</body>
</html>
